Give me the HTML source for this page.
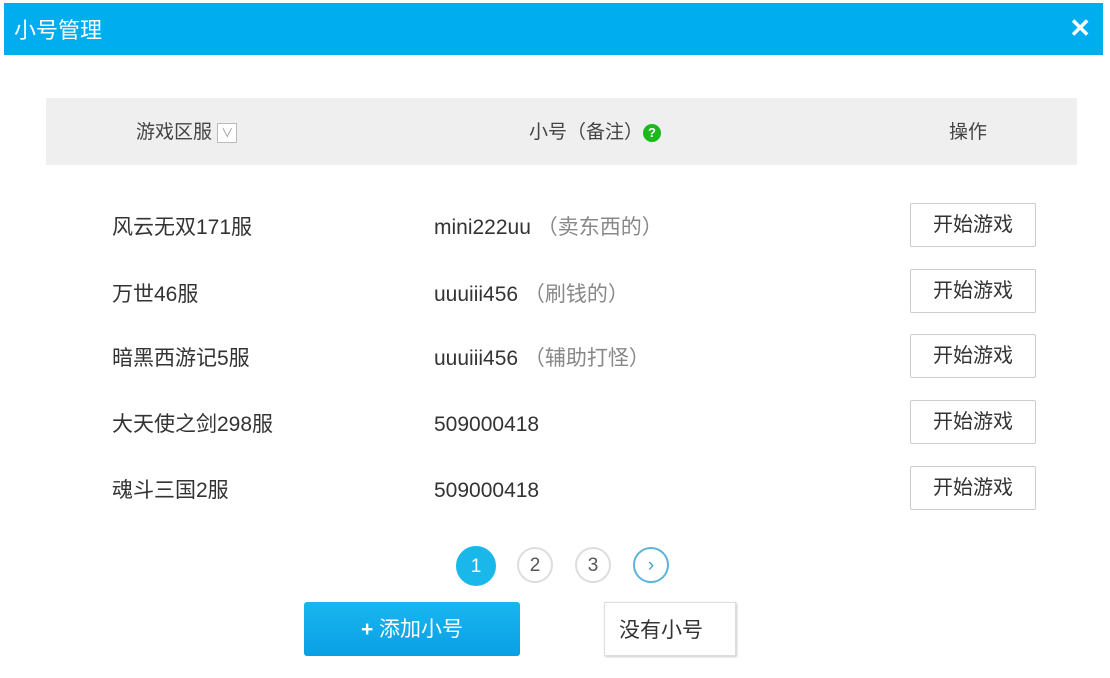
<!DOCTYPE html>
<html><head><meta charset="utf-8"><style>
*{margin:0;padding:0;box-sizing:border-box}
body{width:1110px;height:678px;background:#fff;position:relative;overflow:hidden;font-family:"Liberation Sans","Noto Sans CJK SC",sans-serif;color:#333}
.title{position:absolute;left:4px;top:3px;width:1099px;height:52px;background:#00adef}
.title span{position:absolute;left:10px;top:15px;font-size:22px;color:#fff;line-height:26px}
.x{position:absolute;right:12px;top:10px;color:#fff;font-size:26px;font-weight:bold}
.hdr{position:absolute;left:46px;top:98px;width:1031px;height:67px;background:#efefef;font-size:19px;color:#444}
.hdr div{position:absolute;top:22px;line-height:26px}
.t{position:absolute;font-size:21px;color:#333;line-height:28px;height:28px}
.n{color:#888}
.btn{position:absolute;left:910px;width:126px;height:44px;border:1px solid #ccc;border-radius:2px;background:#fff;font-size:20px;text-align:center;line-height:42px;color:#333}
.pg{position:absolute;top:547px;width:36px;height:36px;border-radius:50%;border:2px solid #ddd;text-align:center;line-height:32px;font-size:19px;color:#555}
</style></head><body>
<div class="title"><span>小号管理</span><div class="x">✕</div></div>
<div class="hdr">
<div style="left:90px">游戏区服 <span style="display:inline-block;width:20px;height:20px;border:1px solid #bbb;background:#fff;font-size:12px;line-height:18px;text-align:center;color:#999;vertical-align:middle">∨</span></div>
<div style="left:483px">小号（备注）<span style="display:inline-block;width:18px;height:18px;border-radius:50%;background:#1bb91b;color:#fff;font-size:13px;line-height:18px;text-align:center;font-weight:bold;vertical-align:middle">?</span></div>
<div style="left:903px">操作</div>
</div>
<div class="t" style="left:112px;top:214px">风云无双171服</div><div class="t" style="left:434px;top:214px">mini222uu <span class="n">（卖东西的）</span></div><div class="btn" style="top:203px">开始游戏</div>
<div class="t" style="left:112px;top:281px">万世46服</div><div class="t" style="left:434px;top:281px">uuuiii456 <span class="n">（刷钱的）</span></div><div class="btn" style="top:269px">开始游戏</div>
<div class="t" style="left:112px;top:345px">暗黑西游记5服</div><div class="t" style="left:434px;top:345px">uuuiii456 <span class="n">（辅助打怪）</span></div><div class="btn" style="top:334px">开始游戏</div>
<div class="t" style="left:112px;top:411px">大天使之剑298服</div><div class="t" style="left:434px;top:411px">509000418</div><div class="btn" style="top:400px">开始游戏</div>
<div class="t" style="left:112px;top:477px">魂斗三国2服</div><div class="t" style="left:434px;top:477px">509000418</div><div class="btn" style="top:466px">开始游戏</div>
<div class="pg" style="left:456px;background:#1ab8ea;border-color:#1ab8ea;color:#fff;width:40px;height:40px;top:546px;line-height:38px">1</div>
<div class="pg" style="left:517px;line-height:34px">2</div>
<div class="pg" style="left:575px;line-height:34px">3</div>
<div class="pg" style="left:633px;border-color:#5ab4dc;color:#3aa0d0;line-height:34px">›</div>
<div style="position:absolute;left:304px;top:602px;width:216px;height:54px;border-radius:3px;background:linear-gradient(#19b6f0,#0a9fe4);color:#fff;font-size:21px;text-align:center;line-height:56px"><b>+</b> 添加小号</div>
<div style="position:absolute;left:604px;top:602px;width:132px;height:54px;border:1px solid #ddd;box-shadow:1px 1px 2px #ccc;font-size:21px;line-height:56px;padding-left:14px">没有小号</div>
</body></html>
